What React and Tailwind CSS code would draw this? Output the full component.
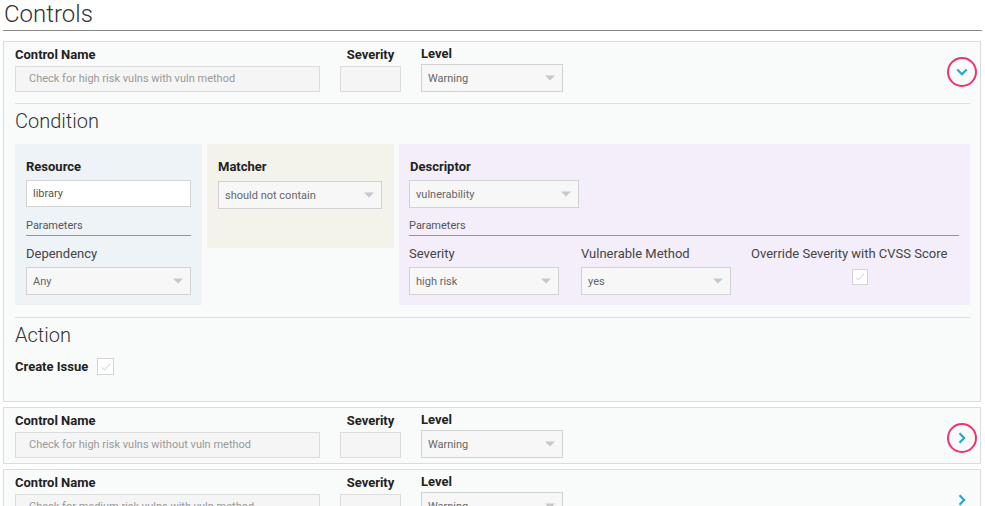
import React from 'react';

const Caret = () => (
  <span className="absolute right-[7px] top-1/2 -translate-y-1/2 w-0 h-0 border-l-[5px] border-r-[5px] border-t-[5px] border-l-transparent border-r-transparent border-t-[#c8c8c8]" />
);

const Select = ({ value, className = '' }) => (
  <div className={`relative h-[28px] bg-[#f7f7f7] border border-[#d2d2d2] flex items-center pl-[6px] pt-[2px] text-[11px] text-[#666] ${className}`}>
    <span>{value}</span>
    <Caret />
  </div>
);

const Checkbox = ({ className = '' }) => (
  <div className={`w-[16px] h-[16px] border border-[#d4d4d4] bg-white flex items-center justify-center ${className}`}>
    <svg viewBox="0 0 16 16" className="w-[12px] h-[12px]" fill="none" stroke="#d8d8d8" strokeWidth="1.4">
      <path d="M2.5 8.5 L6 12 L13.5 3.5" />
    </svg>
  </div>
);

const Toggle = ({ open = false, ring = true }) => (
  <div className={`w-[30px] h-[30px] rounded-full flex items-center justify-center ${ring ? 'border-[2.5px] border-[#f2326a]' : ''}`}>
    <svg viewBox="0 0 16 16" className="w-[14px] h-[14px]" fill="none" stroke="#1ea5d8" strokeWidth="2.4" strokeLinecap="square">
      {open ? <path d="M3.5 6 L8 10.5 L12.5 6" /> : <path d="M6 3.5 L10.5 8 L6 12.5" />}
    </svg>
  </div>
);

const Header = ({ name, open, ring }) => (
  <div className="flex items-end justify-between pl-[11px] pr-[3px]">
    <div className="flex items-end gap-[20px]">
      <div className="flex flex-col">
        <span className="text-[13px] font-bold text-[#222] leading-[16px] mb-[3px]">Control Name</span>
        <div className="w-[305px] h-[26px] bg-[#f5f5f5] border border-[#dcdcdc] flex items-center pl-[13px] pt-[1px] text-[11px] text-[#999] overflow-hidden whitespace-nowrap">
          {name}
        </div>
      </div>
      <div className="flex flex-col items-center">
        <span className="text-[13px] font-bold text-[#222] leading-[16px] mb-[3px]">Severity</span>
        <div className="w-[61px] h-[26px] bg-[#f5f5f5] border border-[#dcdcdc]" />
      </div>
      <div className="flex flex-col">
        <span className="text-[13px] font-bold text-[#222] leading-[16px] mb-[2px]">Level</span>
        <Select value="Warning" className="w-[142px]" />
      </div>
    </div>
    <div className="mb-[5px]">
      <Toggle open={open} ring={ring} />
    </div>
  </div>
);

export default function App() {
  return (
    <div className="min-h-screen bg-white font-['Roboto',sans-serif] px-[3px] overflow-hidden h-[506px]">
      <h1 className="text-[24px] font-light text-[#333] leading-[28px] pl-[1px] pb-[2px] border-b border-[#8a8a8a]">Controls</h1>

      {/* expanded control */}
      <div className="mt-[10px] mr-[1px] border border-[#dcdcdc] bg-[#f9fbfb] pt-[4px] pb-[26px]">
        <Header name="Check for high risk vulns with vuln method" open ring />
        <div className="ml-[11px] mr-[10px] mt-[11px] border-t border-[#dedede]">
          <h2 className="text-[20px] font-light text-[#333] leading-[24px] mt-[5px] mb-[11px]">Condition</h2>
          <div className="flex items-start gap-[5px]">
            <div className="w-[187px] bg-[#eef3f8] pt-[15px] px-[11px] pb-[10px]">
              <div className="text-[13px] font-bold text-[#222] leading-[16px] mb-[5px]">Resource</div>
              <div className="h-[27px] bg-white border border-[#d2d2d2] flex items-center pl-[6px] pt-[1px] text-[11px] text-[#555]">library</div>
              <div className="mt-[12px] pb-[2px] border-b border-[#8e98a4] text-[11px] text-[#555] leading-[14px]">Parameters</div>
              <div className="mt-[10px] text-[13px] text-[#444] leading-[16px]">Dependency</div>
              <Select value="Any" className="mt-[5px]" />
            </div>
            <div className="w-[187px] h-[104px] bg-[#f3f3ec] pt-[15px] px-[11px]">
              <div className="text-[13px] font-bold text-[#222] leading-[16px] mb-[6px]">Matcher</div>
              <Select value="should not contain" className="w-[164px] h-[27px]" />
            </div>
            <div className="flex-1 bg-[#f3eef9] pt-[15px] pl-[10px] pr-[11px] pb-[10px]">
              <div className="text-[13px] font-bold text-[#222] leading-[16px] mb-[5px] pl-[1px]">Descriptor</div>
              <Select value="vulnerability" className="w-[170px]" />
              <div className="mt-[11px] pb-[2px] border-b border-[#8e98a4] text-[11px] text-[#555] leading-[14px]">Parameters</div>
              <div className="flex mt-[10px]">
                <div className="w-[172px]">
                  <div className="text-[13px] text-[#444] leading-[16px]">Severity</div>
                  <Select value="high risk" className="w-[150px] mt-[5px]" />
                </div>
                <div className="w-[170px]">
                  <div className="text-[13px] text-[#444] leading-[16px]">Vulnerable Method</div>
                  <Select value="yes" className="w-[150px] mt-[5px]" />
                </div>
                <div className="flex flex-col">
                  <div className="text-[13px] text-[#444] leading-[16px]">Override Severity with CVSS Score</div>
                  <Checkbox className="mt-[7px] ml-[101px]" />
                </div>
              </div>
            </div>
          </div>
          <div className="mt-[12px] border-t border-[#dedede]">
            <h2 className="text-[20px] font-light text-[#333] leading-[24px] mt-[5px]">Action</h2>
            <div className="flex items-center gap-[9px] mt-[11px]">
              <span className="text-[13px] font-bold text-[#222] leading-[16px]">Create Issue</span>
              <Checkbox className="w-[17px] h-[17px]" />
            </div>
          </div>
        </div>
      </div>

      <div className="mt-[5px] mr-[1px] border border-[#dcdcdc] bg-[#f9fbfb] pt-[4px] pb-[5px]">
        <Header name="Check for high risk vulns without vuln method" ring />
      </div>

      <div className="mt-[5px] mr-[1px] border border-[#dcdcdc] bg-[#f9fbfb] pt-[4px] pb-[5px]">
        <Header name="Check for medium risk vulns with vuln method" ring={false} />
      </div>
    </div>
  );
}
